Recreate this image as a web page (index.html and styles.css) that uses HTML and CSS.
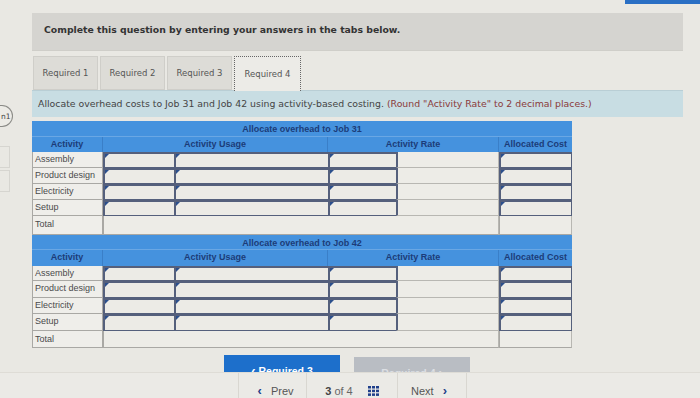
FILE: index.html
```html
<!DOCTYPE html>
<html>
<head>
<meta charset="utf-8">
<link rel="stylesheet" href="styles.css">
</head>
<body>
<div class="topbar"></div>
<div class="page">
  <aside class="side">
    <div class="badge">n1</div>
    <div class="sidebox first"></div>
    <div class="sidebox"></div>
  </aside>
  <main class="main">
    <div class="header">Complete this question by entering your answers in the tabs below.</div>
    <div class="tabs">
      <div class="tab">Required 1</div>
      <div class="tab">Required 2</div>
      <div class="tab">Required 3</div>
      <div class="tab active">Required 4</div>
    </div>
    <div class="instr">Allocate overhead costs to Job 31 and Job 42 using activity-based costing. <span class="note">(Round "Activity Rate" to 2 decimal places.)</span></div>

    <div class="grid t1">
      <div class="title">Allocate overhead to Job 31</div>
      <div class="hd">Activity</div>
      <div class="hd span2">Activity Usage</div>
      <div class="hd span2">Activity Rate</div>
      <div class="hd">Allocated Cost</div>

      <div class="lbl">Assembly</div><div class="inp"></div><div class="inp"></div><div class="inp"></div><div class="st"></div><div class="inp"></div>
      <div class="lbl">Product design</div><div class="inp"></div><div class="inp"></div><div class="inp"></div><div class="st"></div><div class="inp"></div>
      <div class="lbl">Electricity</div><div class="inp"></div><div class="inp"></div><div class="inp"></div><div class="st"></div><div class="inp"></div>
      <div class="lbl">Setup</div><div class="inp"></div><div class="inp"></div><div class="inp"></div><div class="st"></div><div class="inp"></div>
      <div class="lbl total">Total</div><div class="st span4 total"></div><div class="st total"></div>
    </div>

    <div class="grid t2">
      <div class="title">Allocate overhead to Job 42</div>
      <div class="hd">Activity</div>
      <div class="hd span2">Activity Usage</div>
      <div class="hd span2">Activity Rate</div>
      <div class="hd">Allocated Cost</div>

      <div class="lbl">Assembly</div><div class="inp"></div><div class="inp"></div><div class="inp"></div><div class="st"></div><div class="inp"></div>
      <div class="lbl">Product design</div><div class="inp"></div><div class="inp"></div><div class="inp"></div><div class="st"></div><div class="inp"></div>
      <div class="lbl">Electricity</div><div class="inp"></div><div class="inp"></div><div class="inp"></div><div class="st"></div><div class="inp"></div>
      <div class="lbl">Setup</div><div class="inp"></div><div class="inp"></div><div class="inp"></div><div class="st"></div><div class="inp"></div>
      <div class="lbl total">Total</div><div class="st span4 total"></div><div class="st total"></div>
    </div>

    <div class="btns">
      <div class="btn prev"><span class="chev">&lsaquo;</span> Required 3</div>
      <div class="btn next">Required 4 <span class="chev">&rsaquo;</span></div>
    </div>
  </main>
</div>

<nav class="nav">
  <div class="navcell"><span class="nchev">&lsaquo;</span> Prev</div>
  <div class="navcell mid"><b>3</b> of 4
    <svg class="gridicon" width="11" height="10" viewBox="0 0 11 10"><g fill="#1f3f8a"><rect x="0" y="0" width="3" height="2.5"/><rect x="4" y="0" width="3" height="2.5"/><rect x="8" y="0" width="3" height="2.5"/><rect x="0" y="3.7" width="3" height="2.5"/><rect x="4" y="3.7" width="3" height="2.5"/><rect x="8" y="3.7" width="3" height="2.5"/><rect x="0" y="7.4" width="3" height="2.5"/><rect x="4" y="7.4" width="3" height="2.5"/><rect x="8" y="7.4" width="3" height="2.5"/></g></svg>
  </div>
  <div class="navcell">Next <span class="nchev">&rsaquo;</span></div>
</nav>
</body>
</html>
```

FILE: styles.css
```css
html, body {
  margin: 0;
  padding: 0;
  overflow: hidden;
}
body {
  width: 700px;
  height: 398px;
  background: #e9e8e3;
  font-family: "DejaVu Sans", Verdana, sans-serif;
  color: #333;
  position: relative;
}
.topbar {
  position: absolute;
  right: 0;
  top: 0;
  width: 75px;
  height: 4px;
  background: #2a6fc4;
}
.page {
  display: flex;
}
.side {
  width: 32px;
  flex: none;
  padding-top: 105px;
}
.badge {
  width: 13px;
  height: 22px;
  border: 1px solid #8a8a86;
  border-left: none;
  border-radius: 0 12px 12px 0;
  font-size: 7.5px;
  line-height: 22px;
  text-align: left;
  padding-left: 1px;
  box-sizing: border-box;
  color: #444;
  background: #ecebe6;
  overflow: hidden;
  white-space: nowrap;
}
.sidebox {
  width: 9px;
  height: 20px;
  border: 1px solid #d6d5d0;
  border-left: none;
}
.sidebox.first { margin-top: 19px; }
.sidebox + .sidebox { margin-top: 2px; }
.main {
  width: 651px;
  padding-top: 13px;
}
.header {
  height: 38px;
  background: #d5d4d0;
  font-weight: bold;
  font-size: 9.3px;
  color: #333;
  padding-left: 12px;
  line-height: 34px;
  border-bottom: 1px solid #cfcec9;
  box-sizing: border-box;
}
.tabs {
  display: flex;
  gap: 2px;
  margin-top: 5px;
  padding-left: 1px;
  height: 34px;
  align-items: flex-start;
}
.tab {
  width: 65px;
  height: 34px;
  background: #dddcd7;
  border: 1px solid #cfcec9;
  box-sizing: border-box;
  font-size: 8.5px;
  color: #555;
  line-height: 32px;
  text-align: center;
}
.tab.active {
  width: 67px;
  height: 35px;
  background: #ecebe7;
  border: 1.5px dotted #666;
  border-bottom: none;
  line-height: 34px;
  position: relative;
  z-index: 1;
}
.instr {
  height: 27px;
  background: #c8dde3;
  font-size: 9.35px;
  line-height: 26px;
  padding-left: 6px;
  color: #444;
  border-top: 1px solid #b9ced5;
  box-sizing: border-box;
  white-space: nowrap;
}
.note { color: #8a3a3a; }

.grid {
  display: grid;
  width: 540px;
  grid-template-columns: 71px 71px 154px 68px 103px 73px;
  font-family: "Liberation Sans", Arial, sans-serif;
  font-size: 9px;
}
.t1 {
  margin-top: 4px;
  grid-template-rows: 16px 15px 16px 16px 16px 16px 19px;
}
.t2 {
  grid-template-rows: 15px 16px 15px 17px 16px 17px 17px;
}
.title {
  grid-column: 1 / -1;
  background: #4592de;
  color: #1c3c78;
  font-weight: bold;
  text-align: center;
  line-height: 16px;
  border-bottom: 1px solid #6aa7e4;
}
.hd {
  background: #4592de;
  color: #1c3c78;
  font-weight: bold;
  text-align: center;
  line-height: 14px;
  border-right: 1px solid #3a7fc8;
}
.hd:nth-child(5) { border-right: none; }
.span2 { grid-column: span 2; }
.span4 { grid-column: span 4; }
.lbl {
  background: #efeeea;
  border: 1px solid #a9a8a4;
  border-top: none;
  color: #4a4a4a;
  padding-left: 2px;
  line-height: 14px;
  overflow: hidden;
  white-space: nowrap;
}
.inp {
  background: #ecebe6;
  border-top: 2px solid #55607c;
  border-left: 2px solid #55607c;
  border-bottom: 1px solid #55607c;
  position: relative;
}
.inp::before {
  content: "";
  position: absolute;
  left: 0;
  top: 0;
  border-top: 2px solid #2b4f8c;
  border-right: 2px solid transparent;
  border-bottom: 2px solid transparent;
  border-left: 2px solid #2b4f8c;
}
.st {
  background: #edece7;
  border: 1px solid #b8b7b2;
  border-top: none;
  border-left-color: #a9a8a4;
}
.inp + .st { border-left: 2px solid #55607c; }
.st + .inp { border-right: 1px solid #55607c; }
.total { border-bottom: 1px solid #a9a8a4; }
.lbl.total { line-height: 16px; }

.btns {
  display: flex;
  gap: 14px;
  margin-top: 7px;
  padding-left: 192px;
  align-items: flex-start;
}
.btn {
  width: 116px;
  height: 28px;
  font-family: "Liberation Sans", Arial, sans-serif;
  font-size: 10.5px;
  font-weight: bold;
  text-align: center;
  line-height: 28px;
  box-sizing: border-box;
  padding-top: 2px;
}
.btn.prev {
  background: #1d6fcb;
  color: #fff;
}
.btn.next {
  background: #b9bdc3;
  color: #dcdfe3;
  margin-top: 2px;
}
.chev { font-size: 13px; }

.nav {
  position: absolute;
  left: 0;
  top: 372px;
  width: 700px;
  height: 26px;
  background: #ebeae6;
  border-top: 1px solid #dedcd6;
  display: flex;
  padding-left: 238px;
  box-sizing: border-box;
  font-family: "Liberation Sans", Arial, sans-serif;
  font-size: 11px;
  color: #555;
}
.navcell {
  width: 67px;
  border-left: 1px solid #d9d7d1;
  text-align: center;
  padding-top: 12px;
  line-height: 12px;
  white-space: nowrap;
}
.navcell.mid {
  width: 90px;
  color: #666;
}
.navcell.mid b { font-weight: bold; color: #444; }
.navcell:last-child {
  width: 68px;
  border-right: 1px solid #d9d7d1;
}
.nchev {
  color: #1f3f8a;
  font-weight: bold;
  font-size: 13px;
  line-height: 12px;
  margin: 0 6px;
}
.gridicon {
  margin-left: 12px;
  vertical-align: -1px;
}
```
